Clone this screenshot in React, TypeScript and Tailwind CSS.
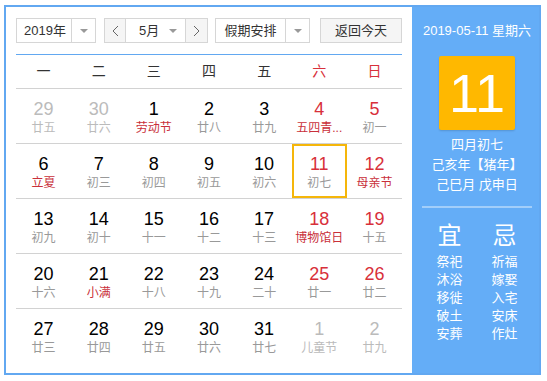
const weekdays = ["一", "二", "三", "四", "五", "六", "日"]

type Day = { n: number; lunar: string; other?: boolean; red?: boolean; lunarRed?: boolean; selected?: boolean }

const days: Day[] = [
  { n: 29, lunar: "廿五", other: true },
  { n: 30, lunar: "廿六", other: true },
  { n: 1, lunar: "劳动节", lunarRed: true },
  { n: 2, lunar: "廿八" },
  { n: 3, lunar: "廿九" },
  { n: 4, lunar: "五四青...", red: true, lunarRed: true },
  { n: 5, lunar: "初一", red: true },
  { n: 6, lunar: "立夏", lunarRed: true },
  { n: 7, lunar: "初三" },
  { n: 8, lunar: "初四" },
  { n: 9, lunar: "初五" },
  { n: 10, lunar: "初六" },
  { n: 11, lunar: "初七", red: true, selected: true },
  { n: 12, lunar: "母亲节", red: true, lunarRed: true },
  { n: 13, lunar: "初九" },
  { n: 14, lunar: "初十" },
  { n: 15, lunar: "十一" },
  { n: 16, lunar: "十二" },
  { n: 17, lunar: "十三" },
  { n: 18, lunar: "博物馆日", red: true, lunarRed: true },
  { n: 19, lunar: "十五", red: true },
  { n: 20, lunar: "十六" },
  { n: 21, lunar: "小满", lunarRed: true },
  { n: 22, lunar: "十八" },
  { n: 23, lunar: "十九" },
  { n: 24, lunar: "二十" },
  { n: 25, lunar: "廿一", red: true },
  { n: 26, lunar: "廿二", red: true },
  { n: 27, lunar: "廿三" },
  { n: 28, lunar: "廿四" },
  { n: 29, lunar: "廿五" },
  { n: 30, lunar: "廿六" },
  { n: 31, lunar: "廿七" },
  { n: 1, lunar: "儿童节", other: true },
  { n: 2, lunar: "廿九", other: true },
]

const yi = ["祭祀", "沐浴", "移徙", "破土", "安葬"]
const ji = ["祈福", "嫁娶", "入宅", "安床", "作灶"]

function Caret() {
  return <span className="block w-0 h-0 border-l-[4px] border-r-[4px] border-t-[4px] border-l-transparent border-r-transparent border-t-[#999]" />
}

function Chevron({ dir }: { dir: "left" | "right" }) {
  return (
    <svg width="7" height="12" viewBox="0 0 7 12">
      <path
        d={dir === "left" ? "M6 1 L1 6 L6 11" : "M1 1 L6 6 L1 11"}
        fill="none"
        stroke="#666"
        strokeWidth="1"
      />
    </svg>
  )
}

export default function App() {
  const rows = [0, 1, 2, 3, 4].map((r) => days.slice(r * 7, r * 7 + 7))
  return (
    <div className="w-[547px] h-[381px] bg-white pt-[5px] pl-[4px] font-['Liberation_Sans','Noto_Sans_CJK_SC',sans-serif]">
      <div className="flex w-[537px] h-[370px] border-2 border-[#62a8f1]">
        <div className="w-[406px] px-[10px] pt-[11px] bg-white">
          <div className="flex items-center h-[25px] text-[13px] text-[#333]">
            <div className="flex h-full w-[80px] border border-[#d6d6d6] bg-white">
              <div className="flex-1 flex items-center justify-center pl-[2px]">2019年</div>
              <div className="w-[24px] border-l border-[#d6d6d6] flex items-center justify-center">
                <Caret />
              </div>
            </div>
            <div className="flex h-full w-[104px] ml-[8px] border border-[#d6d6d6]">
              <div className="w-[21px] bg-[#f5f5f5] border-r border-[#d6d6d6] flex items-center justify-center">
                <Chevron dir="left" />
              </div>
              <div className="flex-1 flex items-center bg-white">
                <span className="ml-[13px]">5月</span>
                <span className="ml-auto mr-[8px]"><Caret /></span>
              </div>
              <div className="w-[22px] bg-[#f5f5f5] border-l border-[#d6d6d6] flex items-center justify-center">
                <Chevron dir="right" />
              </div>
            </div>
            <div className="flex h-full w-[95px] ml-[7px] border border-[#d6d6d6] bg-white">
              <div className="flex-1 flex items-center justify-center">假期安排</div>
              <div className="w-[24px] border-l border-[#d6d6d6] flex items-center justify-center">
                <Caret />
              </div>
            </div>
            <div className="flex h-full items-center justify-center w-[82px] ml-auto border border-[#d6d6d6] bg-[#f5f5f5]">
              返回今天
            </div>
          </div>

          <div className="mt-[11px] grid grid-cols-7 h-[35px] border-t border-b border-t-[#62a8f1] border-b-[#d2d2d2] text-[14px]">
            {weekdays.map((w, i) => (
              <div key={w} className={`flex items-center justify-center ${i >= 5 ? "text-[#d8303a]" : "text-[#333]"}`}>
                {w}
              </div>
            ))}
          </div>

          {rows.map((row, ri) => (
            <div key={ri} className={`grid grid-cols-7 h-[55px] ${ri < 4 ? "border-b border-[#d2d2d2]" : ""}`}>
              {row.map((d, i) => (
                <div
                  key={i}
                  className={`flex flex-col items-center ${d.selected ? "border-2 border-[#f5b60a] pt-[8px] h-[54px]" : "pt-[10px]"}`}
                >
                  <span
                    className={`text-[18px] leading-[20px] ${d.other ? "text-[#bbb]" : d.red ? "text-[#d8303a]" : "text-black"}`}
                  >
                    {d.n}
                  </span>
                  <span
                    className={`text-[12px] leading-[18px] whitespace-nowrap ${d.other ? "text-[#bbb]" : d.lunarRed ? "text-[#c9303a]" : "text-[#999]"}`}
                  >
                    {d.lunar}
                  </span>
                </div>
              ))}
            </div>
          ))}
        </div>

        <div className="flex-1 bg-[#64adf7] flex flex-col items-center pl-[3px] pt-[14px] text-white">
          <div className="text-[13px] leading-[20px] whitespace-nowrap">2019-05-11 星期六</div>
          <div className="mt-[15px] w-[76px] h-[74px] rounded-[2px] bg-[#ffb800] shadow-[0_1px_2px_rgba(0,0,0,0.15)] flex items-center justify-center text-[54px] leading-none">
            11
          </div>
          <div className="mt-[5px] text-[13px] leading-[20px] text-center whitespace-nowrap">
            <div>四月初七</div>
            <div>己亥年【猪年】</div>
            <div>己巳月 戊申日</div>
          </div>
          <div className="mt-[11px] w-[110px] h-[2px] bg-white/40" />
          <div className="mt-[14px] flex gap-[31px] text-[24px] leading-[28px]">
            <span>宜</span>
            <span>忌</span>
          </div>
          <div className="mt-[3px] flex gap-[29px] text-[13px] leading-[18px]">
            <div className="flex flex-col">
              {yi.map((t) => (
                <span key={t}>{t}</span>
              ))}
            </div>
            <div className="flex flex-col">
              {ji.map((t) => (
                <span key={t}>{t}</span>
              ))}
            </div>
          </div>
        </div>
      </div>
    </div>
  )
}
